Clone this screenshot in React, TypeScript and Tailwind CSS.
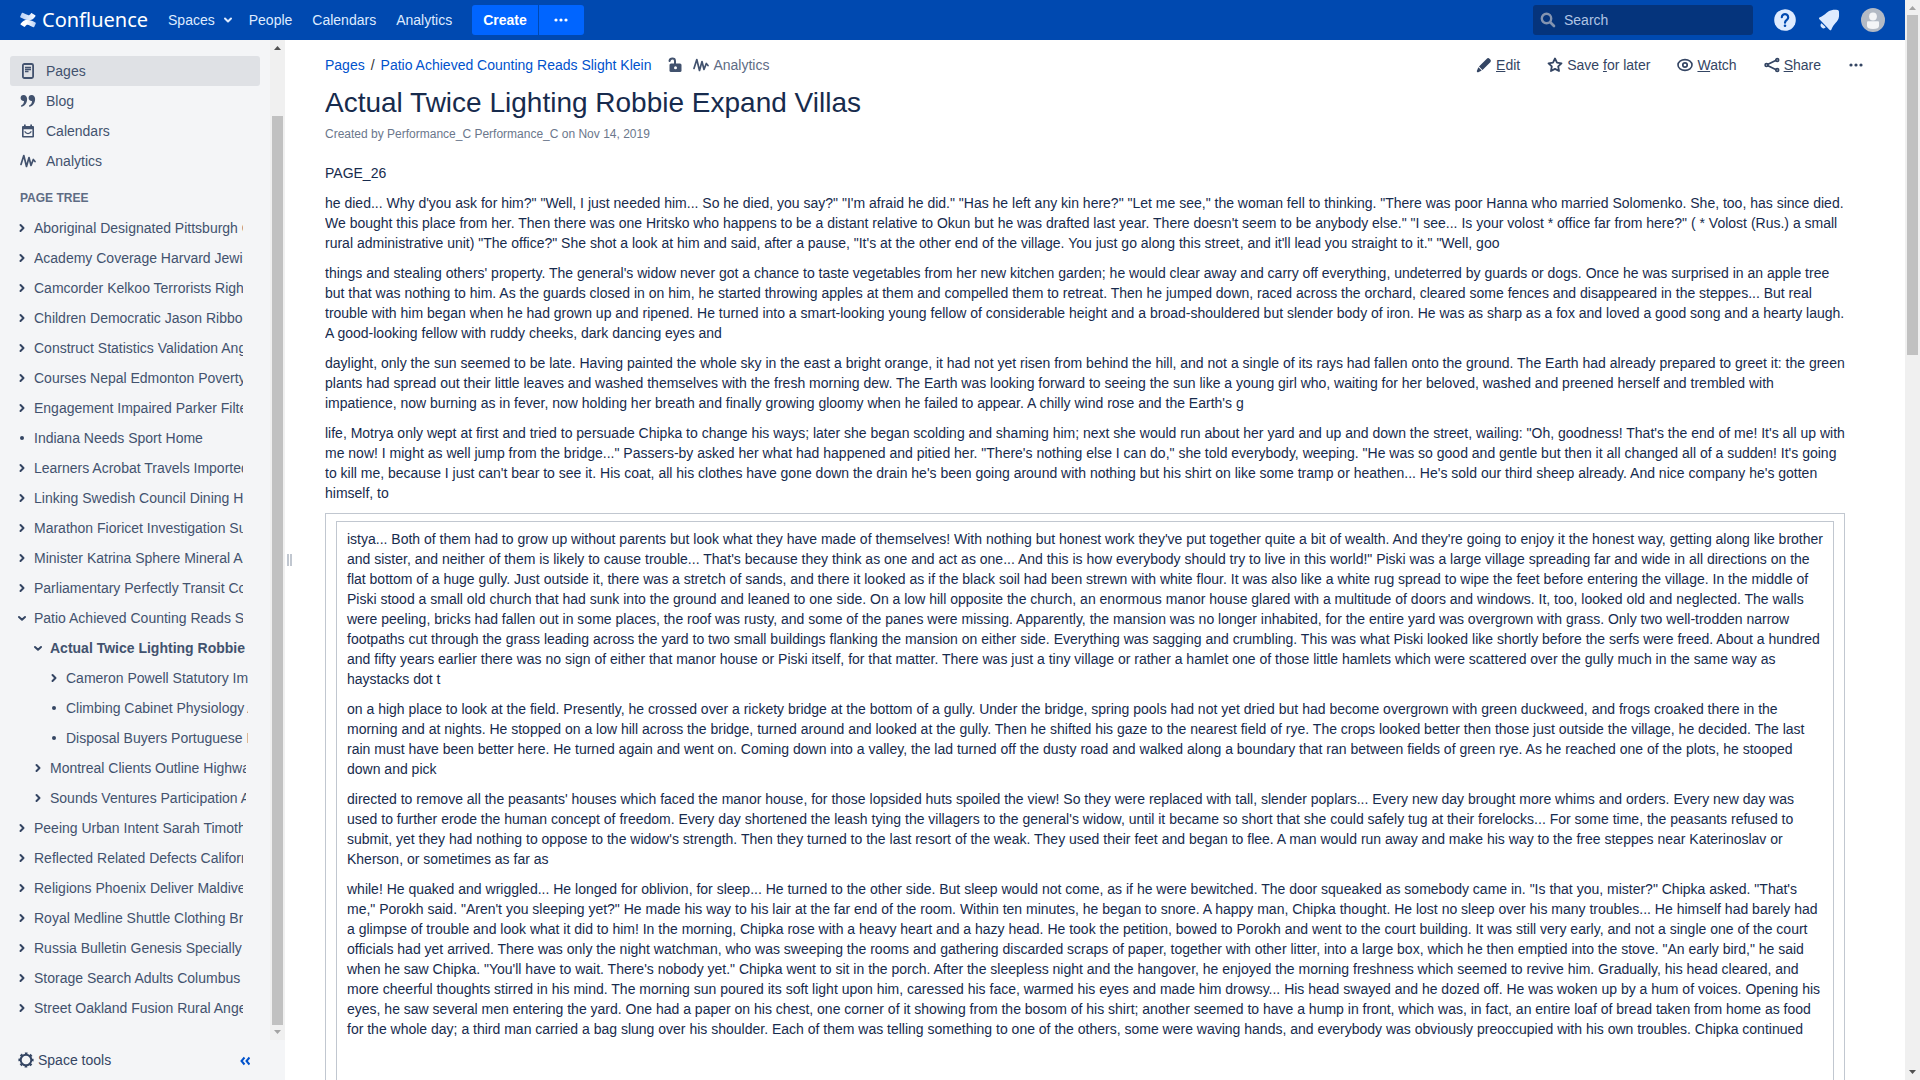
import React from "react";

type Node = { t: string; l: 0 | 1 | 2; k: "closed" | "open" | "leaf"; current?: boolean };

const tree: Node[] = [
  { t: "Aboriginal Designated Pittsburgh Cartoon", l: 0, k: "closed" },
  { t: "Academy Coverage Harvard Jewish", l: 0, k: "closed" },
  { t: "Camcorder Kelkoo Terrorists Rights", l: 0, k: "closed" },
  { t: "Children Democratic Jason Ribbon", l: 0, k: "closed" },
  { t: "Construct Statistics Validation Angels", l: 0, k: "closed" },
  { t: "Courses Nepal Edmonton Poverty", l: 0, k: "closed" },
  { t: "Engagement Impaired Parker Filters", l: 0, k: "closed" },
  { t: "Indiana Needs Sport Home", l: 0, k: "leaf" },
  { t: "Learners Acrobat Travels Imported", l: 0, k: "closed" },
  { t: "Linking Swedish Council Dining Home", l: 0, k: "closed" },
  { t: "Marathon Fioricet Investigation Surge", l: 0, k: "closed" },
  { t: "Minister Katrina Sphere Mineral Area", l: 0, k: "closed" },
  { t: "Parliamentary Perfectly Transit Copy", l: 0, k: "closed" },
  { t: "Patio Achieved Counting Reads Slight Klein", l: 0, k: "open" },
  { t: "Actual Twice Lighting Robbie Expand Villas", l: 1, k: "open", current: true },
  { t: "Cameron Powell Statutory Import", l: 2, k: "closed" },
  { t: "Climbing Cabinet Physiology Area", l: 2, k: "leaf" },
  { t: "Disposal Buyers Portuguese Home", l: 2, k: "leaf" },
  { t: "Montreal Clients Outline Highway", l: 1, k: "closed" },
  { t: "Sounds Ventures Participation Area", l: 1, k: "closed" },
  { t: "Peeing Urban Intent Sarah Timothy", l: 0, k: "closed" },
  { t: "Reflected Related Defects California", l: 0, k: "closed" },
  { t: "Religions Phoenix Deliver Maldives", l: 0, k: "closed" },
  { t: "Royal Medline Shuttle Clothing Broad", l: 0, k: "closed" },
  { t: "Russia Bulletin Genesis Specially", l: 0, k: "closed" },
  { t: "Storage Search Adults Columbus", l: 0, k: "closed" },
  { t: "Street Oakland Fusion Rural Angels", l: 0, k: "closed" },
];

const intro = [
  "PAGE_26",
  `he died... Why d'you ask for him?" "Well, I just needed him... So he died, you say?" "I'm afraid he did." "Has he left any kin here?" "Let me see," the woman fell to thinking. "There was poor Hanna who married Solomenko. She, too, has since died. We bought this place from her. Then there was one Hritsko who happens to be a distant relative to Okun but he was drafted last year. There doesn't seem to be anybody else." "I see... Is your volost * office far from here?" ( * Volost (Rus.) a small rural administrative unit) "The office?" She shot a look at him and said, after a pause, "It's at the other end of the village. You just go along this street, and it'll lead you straight to it." "Well, goo`,
  `things and stealing others' property. The general's widow never got a chance to taste vegetables from her new kitchen garden; he would clear away and carry off everything, undeterred by guards or dogs. Once he was surprised in an apple tree but that was nothing to him. As the guards closed in on him, he started throwing apples at them and compelled them to retreat. Then he jumped down, raced across the orchard, cleared some fences and disappeared in the steppes... But real trouble with him began when he had grown up and ripened. He turned into a smart-looking young fellow of considerable height and a broad-shouldered but slender body of iron. He was as sharp as a fox and loved a good song and a hearty laugh. A good-looking fellow with ruddy cheeks, dark dancing eyes and`,
  `daylight, only the sun seemed to be late. Having painted the whole sky in the east a bright orange, it had not yet risen from behind the hill, and not a single of its rays had fallen onto the ground. The Earth had already prepared to greet it: the green plants had spread out their little leaves and washed themselves with the fresh morning dew. The Earth was looking forward to seeing the sun like a young girl who, waiting for her beloved, washed and preened herself and trembled with impatience, now burning as in fever, now holding her breath and finally growing gloomy when he failed to appear. A chilly wind rose and the Earth's g`,
  `life, Motrya only wept at first and tried to persuade Chipka to change his ways; later she began scolding and shaming him; next she would run about her yard and up and down the street, wailing: "Oh, goodness! That's the end of me! It's all up with me now! I might as well jump from the bridge..." Passers-by asked her what had happened and pitied her. "There's nothing else I can do," she told everybody, weeping. "He was so good and gentle but then it all changed all of a sudden! It's going to kill me, because I just can't bear to see it. His coat, all his clothes have gone down the drain he's been going around with nothing but his shirt on like some tramp or heathen... He's sold our third sheep already. And nice company he's gotten himself, to`,
];

const boxed = [
  `istya... Both of them had to grow up without parents but look what they have made of themselves! With nothing but honest work they've put together quite a bit of wealth. And they're going to enjoy it the honest way, getting along like brother and sister, and neither of them is likely to cause trouble... That's because they think as one and act as one... And this is how everybody should try to live in this world!" Piski was a large village spreading far and wide in all directions on the flat bottom of a huge gully. Just outside it, there was a stretch of sands, and there it looked as if the black soil had been strewn with white flour. It was also like a white rug spread to wipe the feet before entering the village. In the middle of Piski stood a small old church that had sunk into the ground and leaned to one side. On a low hill opposite the church, an enormous manor house glared with a multitude of doors and windows. It, too, looked old and neglected. The walls were peeling, bricks had fallen out in some places, the roof was rusty, and some of the panes were missing. Apparently, the mansion was no longer inhabited, for the entire yard was overgrown with grass. Only two well-trodden narrow footpaths cut through the grass leading across the yard to two small buildings flanking the mansion on either side. Everything was sagging and crumbling. This was what Piski looked like shortly before the serfs were freed. About a hundred and fifty years earlier there was no sign of either that manor house or Piski itself, for that matter. There was just a tiny village or rather a hamlet one of those little hamlets which were scattered over the gully much in the same way as haystacks dot t`,
  `on a high place to look at the field. Presently, he crossed over a rickety bridge at the bottom of a gully. Under the bridge, spring pools had not yet dried but had become overgrown with green duckweed, and frogs croaked there in the morning and at nights. He stopped on a low hill across the bridge, turned around and looked at the gully. Then he shifted his gaze to the nearest field of rye. The crops looked better then those just outside the village, he decided. The last rain must have been better here. He turned again and went on. Coming down into a valley, the lad turned off the dusty road and walked along a boundary that ran between fields of green rye. As he reached one of the plots, he stooped down and pick`,
  `directed to remove all the peasants' houses which faced the manor house, for those lopsided huts spoiled the view! So they were replaced with tall, slender poplars... Every new day brought more whims and orders. Every new day was used to further erode the human concept of freedom. Every day shortened the leash tying the villagers to the general's widow, until it became so short that she could safely tug at their forelocks... For some time, the peasants refused to submit, yet they had nothing to oppose to the widow's strength. Then they turned to the last resort of the weak. They used their feet and began to flee. A man would run away and make his way to the free steppes near Katerinoslav or Kherson, or sometimes as far as`,
  `while! He quaked and wriggled... He longed for oblivion, for sleep... He turned to the other side. But sleep would not come, as if he were bewitched. The door squeaked as somebody came in. "Is that you, mister?" Chipka asked. "That's me," Porokh said. "Aren't you sleeping yet?" He made his way to his lair at the far end of the room. Within ten minutes, he began to snore. A happy man, Chipka thought. He lost no sleep over his many troubles... He himself had barely had a glimpse of trouble and look what it did to him! In the morning, Chipka rose with a heavy heart and a hazy head. He took the petition, bowed to Porokh and went to the court building. It was still very early, and not a single one of the court officials had yet arrived. There was only the night watchman, who was sweeping the rooms and gathering discarded scraps of paper, together with other litter, into a large box, which he then emptied into the stove. "An early bird," he said when he saw Chipka. "You'll have to wait. There's nobody yet." Chipka went to sit in the porch. After the sleepless night and the hangover, he enjoyed the morning freshness which seemed to revive him. Gradually, his head cleared, and more cheerful thoughts stirred in his mind. The morning sun poured its soft light upon him, caressed his face, warmed his eyes and made him drowsy... His head swayed and he dozed off. He was woken up by a hum of voices. Opening his eyes, he saw several men entering the yard. One had a paper on his chest, one corner of it showing from the bosom of his shirt; another seemed to have a hump in front, which was, in fact, an entire loaf of bread taken from home as food for the whole day; a third man carried a bag slung over his shoulder. Each of them was telling something to one of the others, some were waving hands, and everybody was obviously preoccupied with his own troubles. Chipka continued`,
];

const stroke = { fill: "none", stroke: "currentColor", strokeWidth: 2, strokeLinecap: "round", strokeLinejoin: "round" } as const;

function Pulse() {
  return (
    <svg viewBox="0 0 16 16" className="size-4 shrink-0">
      <path {...stroke} d="M1 11.500 3.800 2.500 6.500 13.500 9 4.500l2 8 2.300-6L15 8.500" strokeWidth="1.7" />
    </svg>
  );
}

function Dots() {
  return (
    <svg viewBox="0 0 16 16" className="size-4 shrink-0" fill="currentColor">
      <circle cx="3" cy="8" r="1.6" />
      <circle cx="8" cy="8" r="1.6" />
      <circle cx="13" cy="8" r="1.6" />
    </svg>
  );
}

function Marker({ kind }: { kind: Node["k"] }) {
  return (
    <svg viewBox="0 0 12 12" className="size-3 shrink-0 text-[#344563]">
      {kind === "leaf" && <circle cx="6" cy="6" r="2" fill="currentColor" />}
      {kind === "closed" && <path {...stroke} d="M4.5 3 7.5 6 4.5 9" />}
      {kind === "open" && <path {...stroke} d="M3 5 6 7.7 9 5" />}
    </svg>
  );
}

function Arrow({ up, dark }: { up?: boolean; dark?: boolean }) {
  return (
    <svg viewBox="0 0 15 15" className={dark ? "size-[15px] text-[#505050]" : "size-[15px] text-[#a3a3a3]"}>
      <path fill="currentColor" d={up ? "M4 10h7L7.5 6z" : "M4 5h7L7.5 9z"} />
    </svg>
  );
}

const indent = ["pl-4", "pl-8", "pl-12"];
const clip = ["w-[209px]", "w-[196px]", "w-[182px]"];

const navItems = [
  {
    t: "Pages",
    icon: (
      <svg viewBox="0 0 16 16" className="size-4">
        <rect {...stroke} x="2.9" y="1" width="10.2" height="14" rx="1.5" strokeWidth="1.8" />
        <path {...stroke} d="M5 4.500h6M5 6.500h6M5 8.500h3.500" strokeWidth="1.3" strokeLinecap="butt" />
      </svg>
    ),
  },
  {
    t: "Blog",
    icon: (
      <svg viewBox="0 0 16 16" className="size-4" fill="currentColor">
        <path d="M.6 5a3 3 0 0 1 3-3c2.200 0 3.500 1.700 3.500 4 0 4-2.200 6.800-5.200 7.700-.9.200-1.300-.9-.5-1.400C3.300 11.200 4 10 4 8A3 3 0 0 1 .6 5zM8.600 5a3 3 0 0 1 3-3c2.200 0 3.500 1.700 3.500 4 0 4-2.200 6.800-5.200 7.700-.9.200-1.300-.9-.5-1.400C11.300 11.200 12 10 12 8A3 3 0 0 1 8.600 5z" />
      </svg>
    ),
  },
  {
    t: "Calendars",
    icon: (
      <svg viewBox="0 0 16 16" className="size-4">
        <path fill="currentColor" fillRule="evenodd" d="M4 1.500h1.700V3h4.600V1.500H12V3h1a1 1 0 0 1 1 1v9.500a1 1 0 0 1-1 1H3a1 1 0 0 1-1-1V4a1 1 0 0 1 1-1h1zM3.600 6.200v6.700h8.800V6.200z" />
        <path {...stroke} d="M5 8.800c1.200 2.300 4.800 2.300 6 0" strokeWidth="1.3" />
      </svg>
    ),
  },
  { t: "Analytics", icon: <Pulse /> },
];

export default function App() {
  return (
    <div className="flex h-screen overflow-hidden bg-white font-['Liberation_Sans',Arial,sans-serif] text-sm leading-5 text-[#172b4d]">
      <div className="flex min-w-0 flex-1 flex-col">
        <header className="flex h-10 shrink-0 items-center bg-[#0049b0] px-5 text-[#deebff]">
          <a href="#home" aria-label="Confluence" className="flex items-center gap-1.5 text-white">
            <svg viewBox="0 0 16 16" className="size-4">
              <defs>
                <linearGradient id="lower" x1="0" y1="0" x2="1" y2="0">
                  <stop offset="0" stopColor="#fff" />
                  <stop offset="0.4" stopColor="#fff" />
                  <stop offset="1" stopColor="#b9d0f5" />
                </linearGradient>
                <linearGradient id="upper" x1="1" y1="0" x2="0" y2="0">
                  <stop offset="0" stopColor="#fff" />
                  <stop offset="0.4" stopColor="#dce8fb" />
                  <stop offset="1" stopColor="#b9d0f5" />
                </linearGradient>
              </defs>
              <path fill="url(#lower)" d="M.6 11.800c-.3.400-.2.800.2 1l3.300 2c.4.300.8.100 1-.2 1.400-2.200 2.700-2.100 5-.9l3.200 1.500c.4.200.8 0 1-.4l1.500-3.400c.2-.4 0-.8-.4-1C9.200 7.400 4.800 5.800.6 11.800z" />
              <path fill="url(#upper)" d="M15.400 4.200c.3-.4.2-.8-.2-1l-3.300-2c-.4-.3-.8-.1-1 .2-1.400 2.200-2.700 2.100-5 .9L2.700.8c-.4-.2-.8 0-1 .4L.2 4.600c-.2.400 0 .8.400 1 6.200 3 10.600 4.600 14.800-1.400z" />
            </svg>
            <span className="font-['Noto_Sans',sans-serif] text-xl">Confluence</span>
          </a>
          <nav className="ml-5 flex items-center">
            <button className="flex items-center gap-2">
              Spaces
              <svg viewBox="0 0 10 10" className="size-2.5"><path {...stroke} d="M2 3.500 5 6.500 8 3.500" /></svg>
            </button>
            <a href="#people" className="ml-4">People</a>
            <a href="#calendars" className="ml-5">Calendars</a>
            <a href="#analytics" className="ml-5">Analytics</a>
          </nav>
          <div className="ml-5 flex gap-px text-white">
            <button className="h-[30px] rounded-l-[3px] bg-[#0065ff] px-[11px] font-bold">Create</button>
            <button aria-label="Create from template" className="flex h-[30px] w-[45px] items-center justify-center rounded-r-[3px] bg-[#0065ff]"><Dots /></button>
          </div>
          <label className="ml-auto flex h-[30px] w-[220px] items-center gap-2 rounded-[3px] bg-[#05347c] pl-[7px]">
            <svg viewBox="0 0 16 16" className="size-4 shrink-0 text-[#8494b0]">
              <circle {...stroke} cx="6.5" cy="6.5" r="4.7" strokeWidth="2.4" />
              <path {...stroke} d="M10.500 10.500 14 14" strokeWidth="2.6" />
            </svg>
            <input aria-label="Search" placeholder="Search" className="min-w-0 flex-1 bg-transparent outline-none placeholder:text-[#b0c4e4]" />
          </label>
          <button aria-label="Help" className="ml-5">
            <svg viewBox="0 0 24 24" className="size-6">
              <circle cx="12" cy="12" r="10.8" fill="#deebff" />
              <path d="M8.800 9.200a3.200 3.200 0 1 1 4.900 2.800c-1.200.8-1.700 1.300-1.700 2.700" fill="none" stroke="#0049b0" strokeWidth="2.2" strokeLinecap="round" />
              <circle cx="12" cy="17.7" r="1.3" fill="#0049b0" />
            </svg>
          </button>
          <button aria-label="Notifications" className="ml-5">
            <svg viewBox="0 0 24 24" className="size-6" fill="#deebff">
              <path d="M2.400 11.200c-.6-.6-.5-1.300.1-1.700C9 6.800 10 2.500 15.500 1.900c2-.2 4 .1 5.200.2.700.1 1.100.5 1.200 1.200.1 1.400.3 3.300.1 5.200-.6 5.500-5.500 7-7.700 13.300-.3.600-1 .8-1.600.2z" />
              <path d="M4.500 15.200 8.800 19.300A2.900 2.900 0 0 1 4.500 15.200z" />
            </svg>
          </button>
          <button aria-label="Profile" className="ml-5">
            <svg viewBox="0 0 24 24" className="size-6">
              <circle cx="12" cy="12" r="12" fill="#b3bac5" />
              <circle cx="12" cy="8.5" r="3.9" fill="#f4f5f7" />
              <path d="M6 14.200a1 1 0 0 1 1-1h10a1 1 0 0 1 1 1v3.800c0 2-2 3-6 3s-6-1-6-3z" fill="#f4f5f7" />
            </svg>
          </button>
        </header>

        <div className="flex min-h-0 flex-1">
          <aside className="flex w-[285px] shrink-0 flex-col bg-[#f4f5f7] text-[#42526e]">
            <div className="flex min-h-0 flex-1">
              <div className="min-w-0 flex-1 overflow-hidden pt-4">
                <nav className="mx-2.5">
                  {navItems.map((n) => (
                    <a key={n.t} href="#nav" className={n.t === "Pages" ? "flex h-[30px] items-center gap-2.5 rounded-[3px] bg-[#dfe1e5] pl-2.5" : "flex h-[30px] items-center gap-2.5 pl-2.5"}>
                      {n.icon}
                      {n.t}
                    </a>
                  ))}
                </nav>
                <h2 className="mt-3 mb-[5px] pl-5 text-xs leading-5 font-bold text-[#5e6c84]">PAGE TREE</h2>
                <ul>
                  {tree.map((n) => (
                    <li key={n.t} className={"flex h-[30px] items-center gap-1.5 " + indent[n.l]}>
                      <Marker kind={n.k} />
                      <a href="#page" className={"overflow-hidden whitespace-nowrap " + clip[n.l] + (n.current ? " font-bold" : "")}>{n.t}</a>
                    </li>
                  ))}
                </ul>
              </div>
              <div className="flex w-[15px] shrink-0 flex-col bg-[#f0f0f0]">
                <Arrow up dark />
                <div className="mx-0.5 mt-[61px] flex-1 bg-[#c1c1c1]" />
                <Arrow />
              </div>
            </div>
            <div className="flex h-10 shrink-0 items-center pr-[35px] pl-[18px] text-[#344563]">
              <button className="flex items-center gap-1">
                <svg viewBox="0 0 16 16" className="size-4">
                  <circle {...stroke} cx="8" cy="8" r="5.3" />
                  <circle cx="8" cy="8" r="6.7" fill="none" stroke="currentColor" strokeWidth="1.8" strokeDasharray="2.6 2.66" strokeDashoffset="1.3" />
                </svg>
                Space tools
              </button>
              <button aria-label="Collapse sidebar" className="ml-auto pt-0.5 text-[#0052cc]">
                <svg viewBox="0 0 10 10" className="size-2.5"><path {...stroke} strokeLinecap="butt" strokeLinejoin="miter" d="M4.500 1.500 1.500 5 4.500 8.500M9.500 1.500 6.500 5 9.500 8.500" /></svg>
              </button>
            </div>
          </aside>
          <div className="flex w-10 shrink-0 items-center pl-0.5">
            <div className="h-3 w-[5px] border-x-2 border-[#c1c7d0]" />
          </div>

          <main className="min-w-0 flex-1 overflow-hidden pr-[60px]">
            <div className="flex items-center pt-[15px]">
              <nav className="flex items-center text-[#0052cc]">
                <a href="#pages">Pages</a>
                <span className="px-1.5 text-[#333]">/</span>
                <a href="#parent">Patio Achieved Counting Reads Slight Klein</a>
              </nav>
              <button aria-label="Unrestricted" className="ml-4 text-[#42526e]">
                <svg viewBox="0 0 16 16" className="size-4">
                  <rect x="2.5" y="6.5" width="12" height="8.5" rx="1.5" fill="currentColor" />
                  <path {...stroke} d="M2.500 4C3 .8 8 .8 8 4v3" />
                  <circle cx="8.5" cy="10.7" r="1.5" fill="#fff" />
                </svg>
              </button>
              <a href="#stats" className="ml-2.5 flex items-center gap-1 text-[#5e6c84]"><span className="text-[#42526e]"><Pulse /></span>Analytics</a>
              <div className="ml-auto flex items-center text-[#344563]">
                <button className="flex items-center gap-1">
                  <svg viewBox="0 0 16 16" className="size-4" fill="currentColor">
                    <path d="M10.800 1.700c.8-.8 1.900-.8 2.700 0l.8.800c.8.800.8 1.900 0 2.700L6.500 13 3 9.500z" />
                    <path d="M2.400 10.300 5.700 13.600 2.300 15.200c-1 .4-1.800-.4-1.400-1.400z" />
                  </svg>
                  <span><u>E</u>dit</span>
                </button>
                <button className="ml-[27px] flex items-center gap-1">
                  <svg viewBox="0 0 16 16" className="size-4"><path {...stroke} strokeWidth="1.8" d="M8 1.500 10 5.600l4.500.7-3.300 3.100.8 4.600L8 11.900 4 14l.8-4.600L1.500 6.300 6 5.600z" /></svg>
                  <span>Save <u>f</u>or later</span>
                </button>
                <button className="ml-[27px] flex items-center gap-1">
                  <svg viewBox="0 0 16 16" className="size-4"><ellipse {...stroke} strokeWidth="1.6" cx="8" cy="8" rx="7" ry="5.4" /><circle {...stroke} strokeWidth="1.7" cx="8" cy="8" r="2.2" /></svg>
                  <span><u>W</u>atch</span>
                </button>
                <button className="ml-[27px] flex items-center gap-1">
                  <svg viewBox="0 0 16 16" className="size-4"><g {...stroke} strokeWidth="1.7"><path d="M4 7.300 11.700 3.600M4 8.700l7.700 3.700" /><circle cx="2.500" cy="8" r="1.4" /><circle cx="13.2" cy="3" r="1.4" /><circle cx="13.2" cy="13" r="1.4" /></g></svg>
                  <span><u>S</u>hare</span>
                </button>
                <button aria-label="More actions" className="mr-[-19px] ml-[27px]"><Dots /></button>
              </div>
            </div>
            <h1 className="mt-3 text-[28px] leading-8">Actual Twice Lighting Robbie Expand Villas</h1>
            <p className="mt-[5px] text-xs leading-5 text-[#6b778c]">Created by Performance_C Performance_C on Nov 14, 2019</p>
            <article className="mt-[19px] flex flex-col gap-2.5">
              {intro.map((p) => <p key={p}>{p}</p>)}
              <div className="border border-[#c1c7d0] px-2.5 pt-[7px]">
                <div className="flex h-[700px] flex-col gap-2.5 border border-[#c1c7d0] px-2.5 pt-[7px]">
                  {boxed.map((p) => <p key={p}>{p}</p>)}
                </div>
              </div>
            </article>
          </main>
        </div>
      </div>
      <div className="flex w-[15px] shrink-0 flex-col bg-[#f0f0f0]">
        <Arrow up />
        <div className="mx-0.5 h-[340px] bg-[#c1c1c1]" />
        <div className="flex-1" />
        <Arrow dark />
      </div>
    </div>
  );
}
